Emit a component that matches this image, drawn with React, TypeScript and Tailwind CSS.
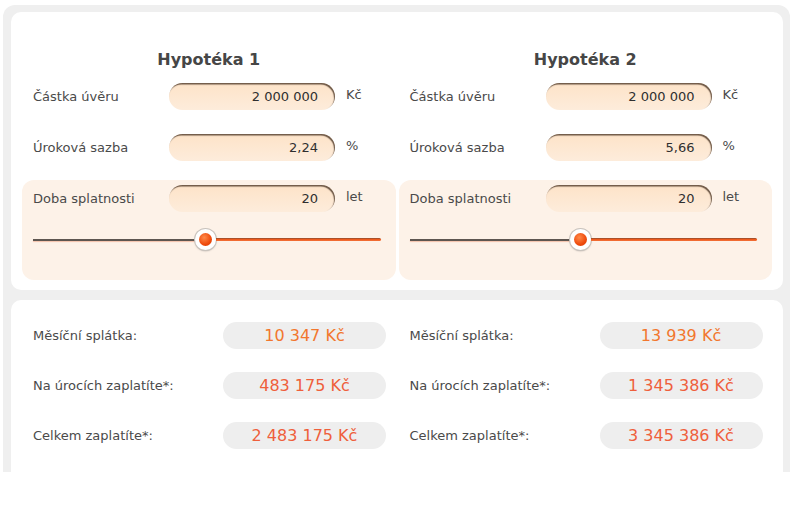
import React from "react";

type Loan = {
  title: string;
  amount: string;
  rate: string;
  years: string;
  pos: number;
  monthly: string;
  interest: string;
  total: string;
};

const loans: Loan[] = [
  {
    title: "Hypotéka 1",
    amount: "2 000 000",
    rate: "2,24",
    years: "20",
    pos: 0.495,
    monthly: "10 347 Kč",
    interest: "483 175 Kč",
    total: "2 483 175 Kč",
  },
  {
    title: "Hypotéka 2",
    amount: "2 000 000",
    rate: "5,66",
    years: "20",
    pos: 0.493,
    monthly: "13 939 Kč",
    interest: "1 345 386 Kč",
    total: "3 345 386 Kč",
  },
];

function Field({ label, value, unit }: { label: string; value: string; unit: string }) {
  return (
    <div className="flex items-center pl-[11px]">
      <span className="w-[136px] text-[13px] text-[#4a4a4a]">{label}</span>
      <div className="flex h-[27px] w-[166px] items-center justify-end rounded-full bg-gradient-to-b from-[#fde3c8] to-[#fdecdb] pr-[17px] text-[13px] text-[#2f2f2f] shadow-[inset_-1px_1.5px_1px_rgba(60,40,25,0.75)]">
        {value}
      </div>
      <span className="ml-[11px] -mt-[4px] text-[13px] text-[#4a4a4a]">{unit}</span>
    </div>
  );
}

function Slider({ pos }: { pos: number }) {
  return (
    <div className="flex h-[21px] items-center pl-[11px] pr-[15px]">
      <div
        className="h-[2px] bg-[#5e5650] shadow-[0_1px_1px_rgba(230,120,80,0.4)]"
        style={{ flexGrow: pos }}
      />
      <div className="flex h-[21px] w-[21px] shrink-0 items-center justify-center rounded-full bg-white shadow-[0_0_0_1px_#c9c3bd,0_1px_2px_rgba(0,0,0,0.35)]">
        <div className="h-[13px] w-[13px] rounded-full bg-[radial-gradient(circle_at_40%_35%,#ff8a4a,#ee4a0c_60%,#d63a00)]" />
      </div>
      <div
        className="h-[3px] rounded-r-full bg-gradient-to-b from-[#8a4a2a] via-[#ee5a1c] to-[#f2733a]"
        style={{ flexGrow: 1 - pos }}
      />
    </div>
  );
}

function Result({ label, value, tone }: { label: string; value: string; tone: string }) {
  return (
    <div className="flex items-center pl-[11px]">
      <span className="w-[190px] text-[13px] text-[#4a4a4a]">{label}</span>
      <div
        className={`flex h-[27px] w-[163px] items-center justify-center rounded-full bg-[#eeeeee] text-[16px] ${tone}`}
      >
        {value}
      </div>
    </div>
  );
}

export default function App() {
  return (
    <div className="h-[505px] w-[800px] bg-white pl-[3px] pt-[5px] font-['DejaVu_Sans',sans-serif]">
      <div className="flex h-[467px] w-[787px] flex-col gap-[10px] rounded-t-[12px] bg-[#efefef] pl-[8px] pr-[7px] pt-[7px]">
        <div className="grid h-[278px] grid-cols-2 gap-[3px] rounded-[10px] bg-white px-[11px] pt-[38px]">
          {loans.map((l) => (
            <div key={l.title} className="flex flex-col">
              <h2 className="text-center text-[16px] font-bold leading-[20px] text-[#464646]">
                {l.title}
              </h2>
              <div className="mt-[13px] flex flex-col gap-[24px]">
                <Field label="Částka úvěru" value={l.amount} unit="Kč" />
                <Field label="Úroková sazba" value={l.rate} unit="%" />
              </div>
              <div className="mt-[19px] h-[100px] rounded-[12px] bg-[#fdf2e8] pt-[5px]">
                <Field label="Doba splatnosti" value={l.years} unit="let" />
                <div className="mt-[17px]">
                  <Slider pos={l.pos} />
                </div>
              </div>
            </div>
          ))}
        </div>
        <div className="grid flex-1 grid-cols-2 gap-[3px] rounded-t-[10px] bg-white px-[11px] pt-[22px]">
          {loans.map((l) => (
            <div key={l.title} className="flex flex-col gap-[23px]">
              <Result label="Měsíční splátka:" value={l.monthly} tone="text-[#f2772e]" />
              <Result label="Na úrocích zaplatíte*:" value={l.interest} tone="text-[#ef5f3c]" />
              <Result label="Celkem zaplatíte*:" value={l.total} tone="text-[#ef5f3c]" />
            </div>
          ))}
        </div>
      </div>
    </div>
  );
}
